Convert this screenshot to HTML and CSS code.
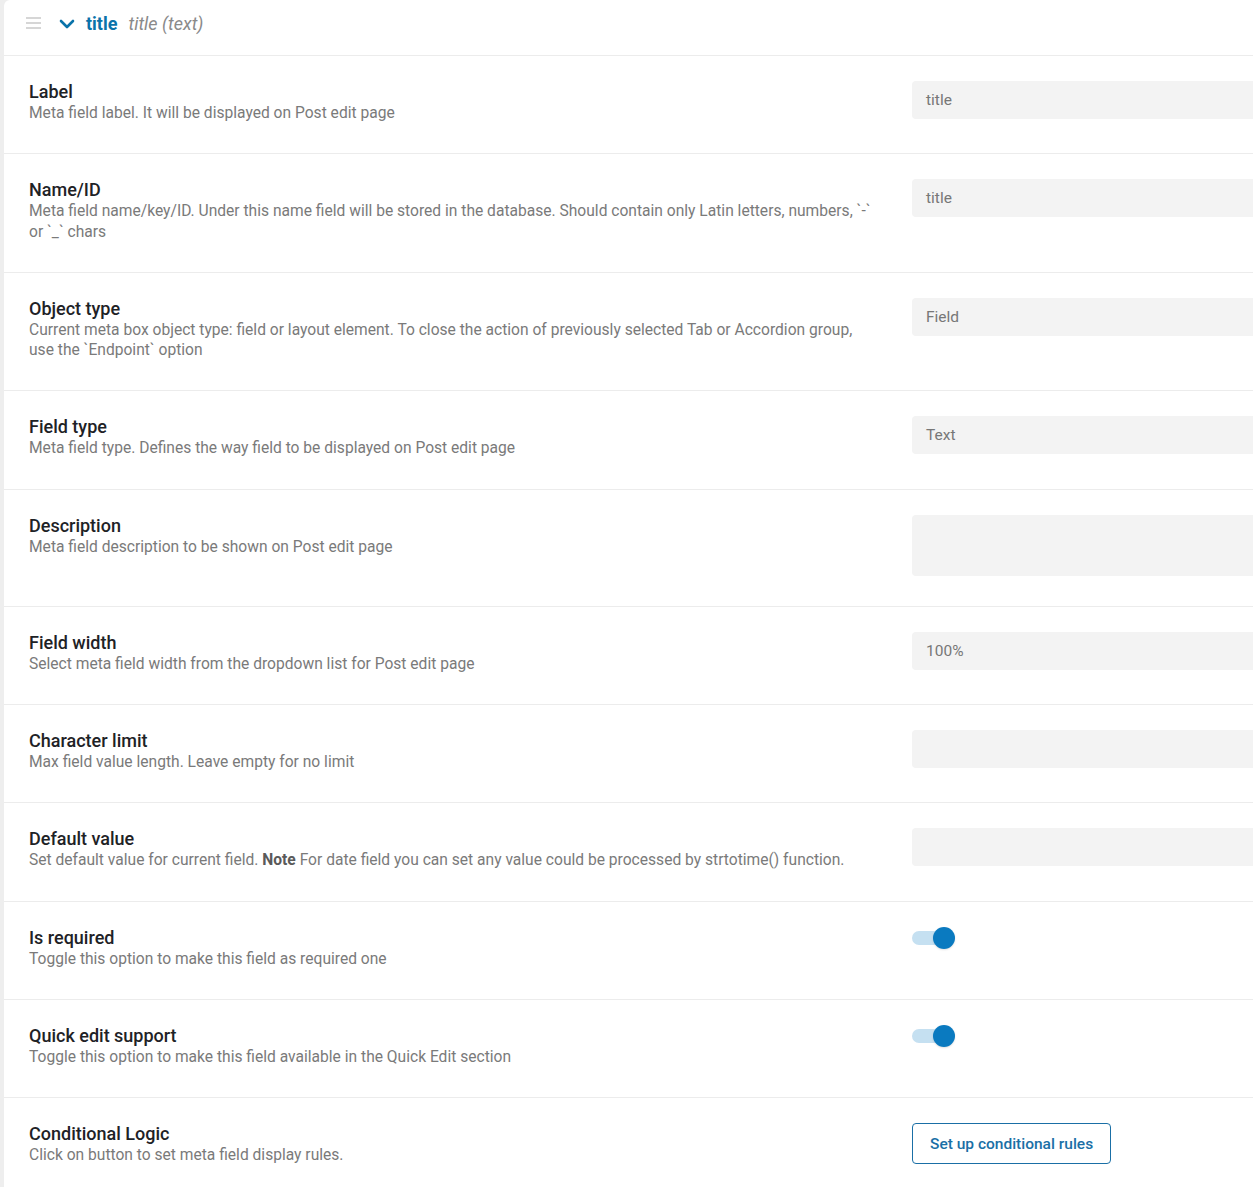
FILE: index.html
```html
<!DOCTYPE html>
<html lang="en">
<head>
<meta charset="utf-8">
<title>Meta field settings</title>
<link rel="stylesheet" href="styles.css">
</head>
<body>
<div class="card">
  <div class="field-head">
    <svg class="drag" width="16" height="12" viewBox="0 0 16 12" aria-hidden="true">
      <rect x="0" y="0" width="15" height="2" fill="#d6d6d6"/>
      <rect x="0" y="5" width="15" height="2" fill="#d6d6d6"/>
      <rect x="0" y="10" width="15" height="2" fill="#d6d6d6"/>
    </svg>
    <svg class="chevron" width="16" height="10" viewBox="0 0 16 10" aria-hidden="true">
      <path d="M2 2 L8 8 L14 2" fill="none" stroke="#0a73aa" stroke-width="2.6" stroke-linecap="round" stroke-linejoin="round"/>
    </svg>
    <span class="head-name">title</span>
    <span class="head-type">title (text)</span>
  </div>

  <div class="row">
    <div class="info">
      <div class="row-title">Label</div>
      <div class="row-desc">Meta field label. It will be displayed on Post edit page</div>
    </div>
    <div class="control"><div class="input">title</div></div>
  </div>

  <div class="row">
    <div class="info">
      <div class="row-title">Name/ID</div>
      <div class="row-desc">Meta field name/key/ID. Under this name field will be stored in the database. Should contain only Latin letters, numbers, `-` or `_` chars</div>
    </div>
    <div class="control"><div class="input">title</div></div>
  </div>

  <div class="row">
    <div class="info">
      <div class="row-title">Object type</div>
      <div class="row-desc">Current meta box object type: field or layout element. To close the action of previously selected Tab or Accordion group, use the `Endpoint` option</div>
    </div>
    <div class="control"><div class="input">Field</div></div>
  </div>

  <div class="row">
    <div class="info">
      <div class="row-title">Field type</div>
      <div class="row-desc">Meta field type. Defines the way field to be displayed on Post edit page</div>
    </div>
    <div class="control"><div class="input">Text</div></div>
  </div>

  <div class="row">
    <div class="info">
      <div class="row-title">Description</div>
      <div class="row-desc">Meta field description to be shown on Post edit page</div>
    </div>
    <div class="control"><div class="input textarea"></div></div>
  </div>

  <div class="row">
    <div class="info">
      <div class="row-title">Field width</div>
      <div class="row-desc">Select meta field width from the dropdown list for Post edit page</div>
    </div>
    <div class="control"><div class="input">100%</div></div>
  </div>

  <div class="row">
    <div class="info">
      <div class="row-title">Character limit</div>
      <div class="row-desc">Max field value length. Leave empty for no limit</div>
    </div>
    <div class="control"><div class="input"></div></div>
  </div>

  <div class="row">
    <div class="info">
      <div class="row-title">Default value</div>
      <div class="row-desc">Set default value for current field. <b>Note</b> For date field you can set any value could be processed by strtotime() function.</div>
    </div>
    <div class="control"><div class="input"></div></div>
  </div>

  <div class="row">
    <div class="info">
      <div class="row-title">Is required</div>
      <div class="row-desc">Toggle this option to make this field as required one</div>
    </div>
    <div class="control"><span class="switch"><span class="knob"></span></span></div>
  </div>

  <div class="row">
    <div class="info">
      <div class="row-title">Quick edit support</div>
      <div class="row-desc">Toggle this option to make this field available in the Quick Edit section</div>
    </div>
    <div class="control"><span class="switch"><span class="knob"></span></span></div>
  </div>

  <div class="row last">
    <div class="info">
      <div class="row-title">Conditional Logic</div>
      <div class="row-desc">Click on button to set meta field display rules.</div>
    </div>
    <div class="control"><button class="btn" type="button">Set up conditional rules</button></div>
  </div>
</div>
</body>
</html>
```

FILE: styles.css
```css
html, body {
  margin: 0;
  padding: 0;
}

body {
  background: #eeeeee;
  font-family: Roboto, "Noto Sans", "Liberation Sans", sans-serif;
  overflow: hidden;
  width: 1253px;
  height: 1187px;
}

.card {
  margin-left: 4px;
  width: 1290px;
  background: #ffffff;
  border-top-left-radius: 6px;
  min-height: 1187px;
}

/* collapsible field header */
.field-head {
  height: 56px;
  box-sizing: border-box;
  display: flex;
  align-items: center;
  padding: 0 0 9px 22px;
  border-bottom: 1px solid #ececec;
}

.drag {
  display: block;
}

.chevron {
  display: block;
  margin-left: 17px;
  margin-top: 2px;
}

.head-name {
  margin-left: 11px;
  font-size: 18px;
  font-weight: 700;
  color: #0a73aa;
}

.head-type {
  margin-left: 11px;
  font-size: 18px;
  font-style: italic;
  color: #8a8a8a;
}

/* setting rows */
.row {
  display: grid;
  grid-template-columns: 850px 360px;
  column-gap: 33px;
  padding: 25px 0 30.1px 25px;
  border-bottom: 1px solid #ececec;
}

.row.last {
  border-bottom: none;
}

.row-title {
  font-size: 18px;
  line-height: 22px;
  font-weight: 500;
  color: #1e2226;
}

.row-desc {
  font-size: 15.6px;
  line-height: 20.2px;
  color: #7a7a7a;
}

.row-desc b {
  font-weight: 700;
  color: #5a5a5a;
}

.input {
  height: 38px;
  box-sizing: border-box;
  background: #f3f3f3;
  border-radius: 4px;
  padding: 0 14px;
  font-size: 15.5px;
  line-height: 38px;
  color: #777777;
}

.input.textarea {
  height: 61px;
}

.switch {
  position: relative;
  display: block;
  width: 40px;
  height: 14px;
  margin-top: 4px;
  border-radius: 7px;
  background: #c5e0f1;
}

.knob {
  position: absolute;
  top: -4px;
  right: -3px;
  width: 22px;
  height: 22px;
  border-radius: 50%;
  background: #0a7ac0;
  box-shadow: 0 1px 2px rgba(0, 0, 0, 0.12);
}

.btn {
  display: block;
  height: 41px;
  padding: 0 17px;
  background: #ffffff;
  border: 1px solid #1a6fa6;
  border-radius: 4px;
  font-family: Roboto, "Noto Sans", "Liberation Sans", sans-serif;
  font-size: 15.5px;
  font-weight: 500;
  color: #1a6fa6;
  cursor: pointer;
}
```
